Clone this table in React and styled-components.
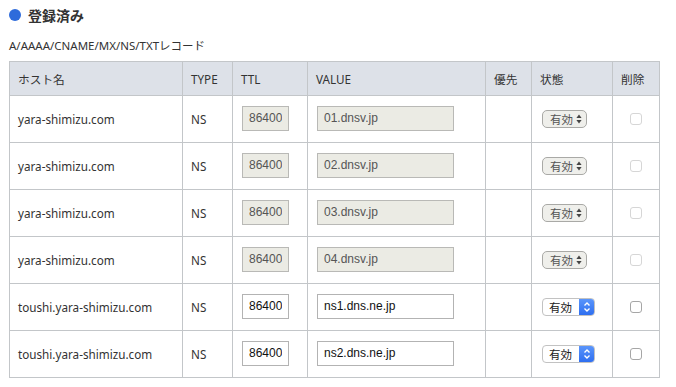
import styled, { createGlobalStyle } from "styled-components";

const GlobalStyle = createGlobalStyle`
  body {
    margin: 0;
    background: #fff;
    font-family: "Noto Sans", "Noto Sans CJK JP", sans-serif;
    color: #333;
  }
`;

const records = [
  { host: "yara-shimizu.com", type: "NS", ttl: "86400", value: "01.dnsv.jp", locked: true },
  { host: "yara-shimizu.com", type: "NS", ttl: "86400", value: "02.dnsv.jp", locked: true },
  { host: "yara-shimizu.com", type: "NS", ttl: "86400", value: "03.dnsv.jp", locked: true },
  { host: "yara-shimizu.com", type: "NS", ttl: "86400", value: "04.dnsv.jp", locked: true },
  { host: "toushi.yara-shimizu.com", type: "NS", ttl: "86400", value: "ns1.dns.ne.jp", locked: false },
  { host: "toushi.yara-shimizu.com", type: "NS", ttl: "86400", value: "ns2.dns.ne.jp", locked: false },
];

const columns = [
  { label: "ホスト名", width: 173 },
  { label: "TYPE", width: 50 },
  { label: "TTL", width: 75 },
  { label: "VALUE", width: 178 },
  { label: "優先", width: 46 },
  { label: "状態", width: 81 },
  { label: "削除", width: 47 },
];

const UpDown = () => (
  <svg width="6" height="10" viewBox="0 0 6 10">
    <path d="M3 0.5 L5.6 4 L0.4 4 Z" fill="#444" />
    <path d="M3 9.5 L5.6 6 L0.4 6 Z" fill="#444" />
  </svg>
);

const Chevrons = () => (
  <svg width="8" height="12" viewBox="0 0 8 12">
    <path d="M1.5 4.5 L4 2 L6.5 4.5" fill="none" stroke="#fff" strokeWidth="1.4" />
    <path d="M1.5 7.5 L4 10 L6.5 7.5" fill="none" stroke="#fff" strokeWidth="1.4" />
  </svg>
);

export default function App() {
  return (
    <>
      <GlobalStyle />
      <Page>
        <Title>
          <Dot />
          登録済み
        </Title>
        <Caption>A/AAAA/CNAME/MX/NS/TXTレコード</Caption>
        <Table>
          <colgroup>
            {columns.map((c) => (
              <col key={c.label} style={{ width: c.width }} />
            ))}
          </colgroup>
          <thead>
            <tr>
              {columns.map((c) => (
                <Th key={c.label}>{c.label}</Th>
              ))}
            </tr>
          </thead>
          <tbody>
            {records.map((r, i) => (
              <tr key={i}>
                <Td>{r.host}</Td>
                <Td>{r.type}</Td>
                <Td>
                  <Field $w={47} $locked={r.locked} defaultValue={r.ttl} readOnly={r.locked} />
                </Td>
                <Td>
                  <Field $w={137} $locked={r.locked} defaultValue={r.value} readOnly={r.locked} />
                </Td>
                <Td />
                <Td>
                  {r.locked ? (
                    <LockedSelect>
                      有効
                      <UpDown />
                    </LockedSelect>
                  ) : (
                    <Select>
                      <SelectText>有効</SelectText>
                      <SelectButton>
                        <Chevrons />
                      </SelectButton>
                    </Select>
                  )}
                </Td>
                <Td $center>
                  <Check $locked={r.locked} />
                </Td>
              </tr>
            ))}
          </tbody>
        </Table>
      </Page>
    </>
  );
}

const Page = styled.div`
  padding: 0 16px 0 9px;
`;

const Title = styled.h2`
  display: flex;
  align-items: center;
  gap: 7px;
  height: 29px;
  margin: 0;
  font-size: 14px;
  font-weight: 700;
  color: #333;
`;

const Dot = styled.span`
  width: 12px;
  height: 12px;
  border-radius: 50%;
  background: #2e6bdb;
`;

const Caption = styled.p`
  box-sizing: border-box;
  margin: 0;
  height: 32px;
  padding-top: 2px;
  line-height: 30px;
  font-size: 11.5px;
  color: #333;
`;

const Table = styled.table`
  border-collapse: collapse;
  table-layout: fixed;
  width: 651px;
  font-size: 11.7px;
`;

const Th = styled.th`
  height: 33px;
  padding: 0 8px;
  background: #dde1e8;
  border: 1px solid #c3c6c9;
  text-align: left;
  font-weight: 400;
  color: #333;
`;

const Td = styled.td`
  height: 46px;
  padding: 0 8px;
  border: 1px solid #c3c6c9;
  text-align: ${(p) => (p.$center ? "center" : "left")};
  vertical-align: middle;
  color: #333;
  white-space: nowrap;
`;

const Field = styled.input`
  box-sizing: border-box;
  display: block;
  width: ${(p) => p.$w}px;
  height: 25px;
  margin: 0 0 2px 1px;
  padding: 0 6px;
  border: 1px solid ${(p) => (p.$locked ? "#b9b9b6" : "#b3b3b3")};
  border-radius: 0;
  background: ${(p) => (p.$locked ? "#ebebe4" : "#fff")};
  color: ${(p) => (p.$locked ? "#555" : "#111")};
  font-family: "Liberation Sans", Arial, sans-serif;
  font-size: 12px;
  outline: none;
`;

const LockedSelect = styled.span`
  box-sizing: border-box;
  display: inline-flex;
  align-items: center;
  gap: 3px;
  height: 18px;
  margin-left: 2px;
  padding: 0 4px 0 7px;
  border: 1px solid #a9a9a6;
  border-radius: 5px;
  background: #efefeb;
  font-size: 11.5px;
  color: #555;
`;

const Select = styled.span`
  box-sizing: border-box;
  display: inline-flex;
  align-items: stretch;
  height: 18px;
  margin-left: 2px;
  border: 1px solid #c2c2c2;
  border-radius: 4px;
  background: #fff;
  overflow: hidden;
`;

const SelectText = styled.span`
  box-sizing: border-box;
  display: flex;
  align-items: center;
  width: 36px;
  padding-left: 6px;
  font-size: 11.5px;
  color: #222;
`;

const SelectButton = styled.span`
  display: flex;
  align-items: center;
  justify-content: center;
  width: 15px;
  background: linear-gradient(#5a95fb, #2f6ff0);
`;

const Check = styled.span`
  box-sizing: border-box;
  display: inline-block;
  width: 12px;
  height: 12px;
  margin-bottom: 3px;
  border: 1px solid ${(p) => (p.$locked ? "#d6d6d6" : "#a6a6a6")};
  border-radius: 3px;
  background: #fff;
  vertical-align: middle;
`;
